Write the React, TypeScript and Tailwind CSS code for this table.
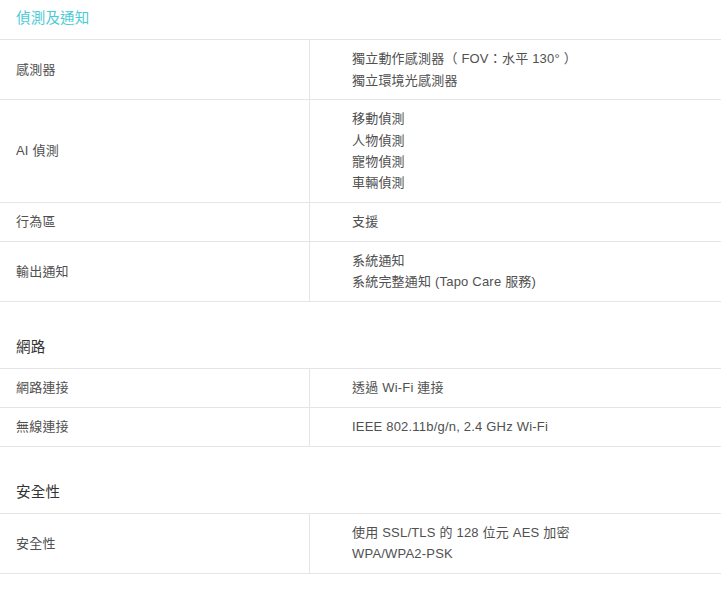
import React from "react";

type Row = { label: string; values: string[] };

const font = { fontFamily: '"Liberation Sans", Arial, "Noto Sans CJK TC", sans-serif' };

function SpecRow({ row }: { row: Row }) {
  return (
    <div className="flex border-b border-[#e5e5e8]">
      <div className="w-[310px] shrink-0 border-r border-[#e5e5e8] pl-4 flex items-center py-[8.3px] leading-[21.3px]">
        {row.label}
      </div>
      <div className="flex-1 pl-[42px] py-[8.3px] leading-[21.3px] flex flex-col">
        {row.values.map((v, i) => (
          <span key={i}>{v}</span>
        ))}
      </div>
    </div>
  );
}

function Section({ title, rows, first }: { title: string; rows: Row[]; first?: boolean }) {
  return (
    <div>
      <div
        className={
          first
            ? "pl-4 pt-[8px] pb-[10px] leading-[21px] text-[14.5px] text-[#4acbd6] border-b border-[#e5e5e8]"
            : "pl-4 pt-[35px] pb-[10px] leading-[21px] text-[14.5px] text-[#333333] border-b border-[#e5e5e8]"
        }
      >
        {title}
      </div>
      {rows.map((r, i) => (
        <SpecRow key={i} row={r} />
      ))}
    </div>
  );
}

export default function App() {
  return (
    <div className="w-[721px] bg-white text-[13px] tracking-[0.2px] text-[#505050]" style={font}>
      <Section
        first
        title="偵測及通知"
        rows={[
          { label: "感測器", values: ["獨立動作感測器（ FOV：水平 130° ）", "獨立環境光感測器"] },
          { label: "AI 偵測", values: ["移動偵測", "人物偵測", "寵物偵測", "車輛偵測"] },
          { label: "行為區", values: ["支援"] },
          { label: "輸出通知", values: ["系統通知", "系統完整通知 (Tapo Care 服務)"] },
        ]}
      />
      <Section
        title="網路"
        rows={[
          { label: "網路連接", values: ["透過 Wi-Fi 連接"] },
          { label: "無線連接", values: ["IEEE 802.11b/g/n, 2.4 GHz Wi-Fi"] },
        ]}
      />
      <Section
        title="安全性"
        rows={[{ label: "安全性", values: ["使用 SSL/TLS 的 128 位元 AES 加密", "WPA/WPA2-PSK"] }]}
      />
    </div>
  );
}
